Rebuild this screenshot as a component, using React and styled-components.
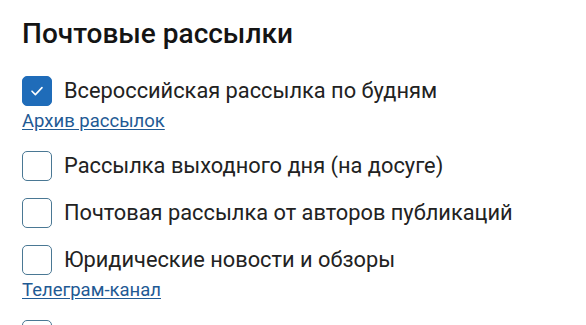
import React, { useState } from "react";
import styled, { createGlobalStyle } from "styled-components";

const GlobalStyle = createGlobalStyle`
  html, body {
    margin: 0;
    padding: 0;
    background: #ffffff;
  }
  body {
    font-family: Roboto, "Noto Sans", "Liberation Sans", sans-serif;
    color: #1f1f1f;
  }
`;

const Section = styled.section`
  padding: 17px 22px 0;
`;

const Title = styled.h2`
  margin: 0 0 25px;
  font-size: 28px;
  line-height: 34px;
  font-weight: 500;
  color: #141414;
`;

const List = styled.div`
  display: flex;
  flex-direction: column;
`;

const Item = styled.div`
  display: flex;
  flex-direction: column;
  align-items: flex-start;
  margin-bottom: 17px;
`;

const Row = styled.label`
  display: flex;
  align-items: center;
  gap: 12px;
  cursor: pointer;
  font-size: 21.8px;
  line-height: 30px;
  color: #222222;
`;

const Box = styled.span`
  flex: none;
  width: 30px;
  height: 30px;
  box-sizing: border-box;
  border-radius: 5px;
  border: 1.5px solid ${(p) => (p.$checked ? "#1f6cb9" : "#4a7894")};
  background: ${(p) => (p.$checked ? "#1f6cb9" : "#ffffff")};
  display: flex;
  align-items: center;
  justify-content: center;
`;

const Link = styled.a`
  display: block;
  margin: 3px 0 1px;
  font-size: 18.5px;
  line-height: 24px;
  color: #1f5a94;
  text-decoration: underline;
  text-underline-offset: 2px;
`;

const items = [
  { id: 1, label: "Всероссийская рассылка по будням", checked: true, link: "Архив рассылок" },
  { id: 2, label: "Рассылка выходного дня (на досуге)" },
  { id: 3, label: "Почтовая рассылка от авторов публикаций" },
  { id: 4, label: "Юридические новости и обзоры", link: "Телеграм-канал" },
  { id: 5, label: "Новости" },
];

function Check({ checked }) {
  return (
    <Box $checked={checked}>
      {checked && (
        <svg width="14" height="12" viewBox="0 0 14 12" fill="none">
          <path d="M2 6.2l3.4 3.4L12 2.6" stroke="#fff" strokeWidth="1.6" strokeLinecap="round" strokeLinejoin="round" />
        </svg>
      )}
    </Box>
  );
}

export default function App() {
  const [state, setState] = useState(() =>
    Object.fromEntries(items.map((i) => [i.id, !!i.checked]))
  );

  return (
    <>
      <GlobalStyle />
      <Section>
        <Title>Почтовые рассылки</Title>
        <List>
          {items.map((item) => (
            <Item key={item.id}>
              <Row onClick={() => setState((s) => ({ ...s, [item.id]: !s[item.id] }))}>
                <Check checked={state[item.id]} />
                {item.label}
              </Row>
              {item.link && <Link href="#">{item.link}</Link>}
            </Item>
          ))}
        </List>
      </Section>
    </>
  );
}
